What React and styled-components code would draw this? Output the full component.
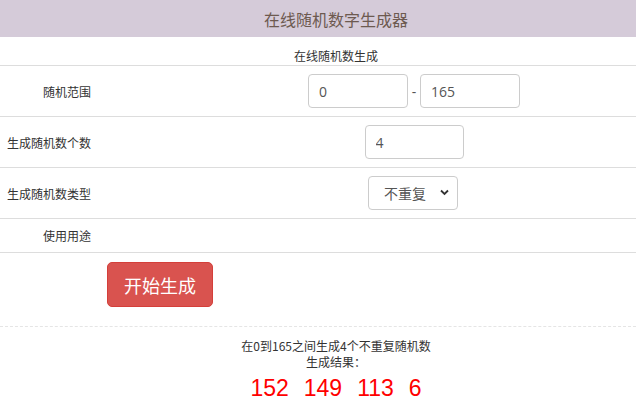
import React from 'react'
import styled, { createGlobalStyle } from 'styled-components'

const GlobalStyle = createGlobalStyle`
    html, body {
        margin: 0;
        padding: 0;
        background: #fff;
    }
    body {
        font-family: "Open Sans", "Noto Sans CJK SC", sans-serif;
        color: #333;
    }
`

// the page content is centred a little right of the window (at x=336)
const Page = styled.div`
    width: 100%;
`

const Header = styled.div`
    height: 37px;
    padding-left: 36px;
    background: #d5cbd9;
    color: #6d5a50;
    font-size: 16px;
    font-family: "Noto Sans CJK SC", sans-serif;
    display: flex;
    align-items: center;
    justify-content: center;
`

const Caption = styled.div`
    height: 29px;
    box-sizing: border-box;
    padding: 11px 0 0 36px;
    text-align: center;
    font-size: 12px;
    line-height: 16px;
    font-family: "Noto Sans CJK SC", sans-serif;
    border-bottom: 1px solid #ddd;
`

const Row = styled.div`
    display: grid;
    grid-template-columns: 192px 1fr;
    height: ${p => p.h}px;
    box-sizing: border-box;
    border-bottom: 1px solid #ddd;
`

const Label = styled.div`
    padding-right: 101px;
    font-size: 12px;
    font-family: "Noto Sans CJK SC", sans-serif;
    display: flex;
    align-items: center;
    justify-content: flex-end;
    white-space: nowrap;
`

const Field = styled.div`
    display: flex;
    align-items: center;
    justify-content: center;
    gap: 3px;
`

const Input = styled.input`
    width: ${p => p.w || 100}px;
    height: 34px;
    box-sizing: border-box;
    border: 1px solid #ccc;
    border-radius: 4px;
    padding: 0 10px;
    font-size: 14px;
    font-family: "Open Sans", sans-serif;
    color: #555;
    outline: none;
`

const Dash = styled.span`
    font-size: 14px;
    color: #555;
    width: 6px;
    text-align: center;
`

const SelectBox = styled.div`
    position: relative;
    width: 90px;
    height: 34px;
    margin-left: -2px;
`

const Select = styled.select`
    appearance: none;
    width: 100%;
    height: 100%;
    box-sizing: border-box;
    border: 1px solid #ccc;
    border-radius: 4px;
    background: #fff;
    padding: 0 0 0 15px;
    font-size: 14px;
    font-family: "Noto Sans CJK SC", sans-serif;
    color: #555;
    outline: none;
`

const Chevron = styled.svg`
    position: absolute;
    right: 9px;
    top: 13px;
    pointer-events: none;
`

const ButtonArea = styled.div`
    height: 74px;
    box-sizing: border-box;
    padding: 9px 0 0 107px;
    border-bottom: 1px dashed #e5e5e5;
`

const StartButton = styled.button`
    width: 106px;
    height: 45px;
    border: 1px solid #d43f3a;
    border-radius: 5px;
    background: #d9534f;
    color: #fff;
    font-size: 18px;
    font-family: "Noto Sans CJK SC", sans-serif;
    cursor: pointer;
    padding: 0;
`

const Result = styled.div`
    padding: 11px 0 0 36px;
    text-align: center;
    font-size: 12px;
    line-height: 16px;
    font-family: "Noto Sans CJK SC", sans-serif;
    color: #333;
`

const Numbers = styled.div`
    margin-top: 4px;
    display: flex;
    justify-content: center;
    gap: 15px;
    color: #f00;
    font-size: 23px;
    line-height: 28px;
    font-family: "Liberation Sans", Arial, sans-serif;
`

export default function App() {
    const results = [152, 149, 113, 6]
    return (
        <Page>
            <GlobalStyle />
            <Header>在线随机数字生成器</Header>
            <Caption>在线随机数生成</Caption>
            <Row h={51}>
                <Label>随机范围</Label>
                <Field>
                    <Input defaultValue="0" />
                    <Dash>-</Dash>
                    <Input defaultValue="165" />
                </Field>
            </Row>
            <Row h={51}>
                <Label>生成随机数个数</Label>
                <Field>
                    <Input w={99} defaultValue="4" />
                </Field>
            </Row>
            <Row h={51}>
                <Label>生成随机数类型</Label>
                <Field>
                    <SelectBox>
                        <Select defaultValue="1">
                            <option value="1">不重复</option>
                            <option value="2">可重复</option>
                        </Select>
                        <Chevron width="9" height="7" viewBox="0 0 9 7">
                            <path d="M1 1.5 L4.5 5 L8 1.5" fill="none" stroke="#333" strokeWidth="1.8" />
                        </Chevron>
                    </SelectBox>
                </Field>
            </Row>
            <Row h={34}>
                <Label>使用用途</Label>
                <Field />
            </Row>
            <ButtonArea>
                <StartButton>开始生成</StartButton>
            </ButtonArea>
            <Result>
                <div>在0到165之间生成4个不重复随机数</div>
                <div>生成结果：</div>
                <Numbers>
                    {results.map(n => <span key={n}>{n}</span>)}
                </Numbers>
            </Result>
        </Page>
    )
}
